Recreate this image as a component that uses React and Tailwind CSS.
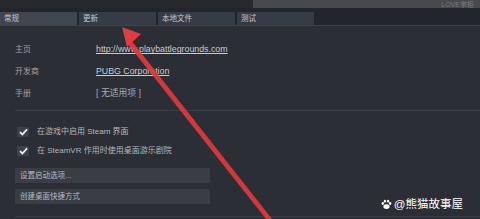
import React from 'react';

const tabs = ['常规', '更新', '本地文件', '测试'];

const info = [
  { label: '主页', value: 'http://www.playbattlegrounds.com', link: true },
  { label: '开发商', value: 'PUBG Corporation', link: true },
  { label: '手册', value: '[ 无适用项 ]', link: false },
];

function Check() {
  return (
    <span className="w-[12px] h-[10px] bg-[#3c4048] rounded-[1px] flex items-center justify-center">
      <svg width="9" height="8" viewBox="0 0 9 8">
        <path d="M1 4.2 L3.4 6.5 L8 1.3" fill="none" stroke="#f2f2f2" strokeWidth="1.8" />
      </svg>
    </span>
  );
}

function Arrow() {
  return (
    <svg className="absolute inset-0 pointer-events-none" width="480" height="219" viewBox="0 0 480 219">
      <path d="M131 40 L272 219 L266 219 L127 43 Z" fill="#e0393e" opacity="0.92" />
      <path d="M122 27 L141 34 L127 47 Z" fill="#e53a3f" />
    </svg>
  );
}

export default function App() {
  return (
    <div
      className="relative w-[480px] h-[219px] overflow-hidden bg-[#2b2e34] flex flex-col"
      style={{ fontFamily: '"Liberation Sans", "Noto Sans CJK SC", sans-serif' }}
    >
      {/* window strip */}
      <div className="h-[8px] flex">
        <div className="w-[253px] bg-[#27292d]" />
        <div className="flex-1 bg-[#48494c] flex justify-end items-end overflow-hidden">
          <span className="text-[7px] leading-[7px] mr-[6px] text-[#7b7c80]">LOVE掌柜</span>
        </div>
      </div>

      {/* tabs */}
      <div className="h-[18px] bg-[#22262c] flex items-end gap-[2px] border-b border-[#3c434d]">
        {tabs.map((t, i) => (
          <div
            key={t}
            className={
              'w-[77px] h-[13px] flex items-center pl-[4px] text-[7.5px] text-[#c3c6cb] ' +
              (i === 0 ? 'bg-[#3f4650]' : 'bg-[#363c45]')
            }
          >
            {t}
          </div>
        ))}
      </div>

      {/* general info */}
      <div className="pl-[15px] pt-[13px] flex flex-col">
        {info.map(row => (
          <div key={row.label} className="h-[22px] flex items-center">
            <span className="w-[81px] text-[8px] text-[#9ea1a6]">{row.label}</span>
            <span
              className={
                'text-[8.8px] ' +
                (row.link ? 'text-[#c9ccd1] underline underline-offset-1' : 'text-[#a9acb1]')
              }
            >
              {row.value}
            </span>
          </div>
        ))}
      </div>

      <div className="ml-[15px] mt-[5px] border-t border-[#3a3e45]" />

      {/* options */}
      <div className="pl-[17px] pt-[15px] flex flex-col gap-[7px]">
        <label className="flex items-center gap-[8px] h-[12px]">
          <Check />
          <span className="text-[8px] text-[#b4b7bc]">在游戏中启用 Steam 界面</span>
        </label>
        <label className="flex items-center gap-[8px] h-[12px]">
          <Check />
          <span className="text-[8px] text-[#b4b7bc]">在 SteamVR 作用时使用桌面游乐剧院</span>
        </label>
      </div>

      <div className="pl-[15px] pt-[11px] flex flex-col gap-[6px]">
        <button className="w-[195px] h-[15px] bg-[#393d44] text-left pl-[5px] text-[7.5px] text-[#b8bbc0]">
          设置启动选项...
        </button>
        <button className="w-[195px] h-[15px] bg-[#393d44] text-left pl-[5px] text-[7.5px] text-[#b8bbc0]">
          创建桌面快捷方式
        </button>
      </div>

      <div className="ml-[15px] mt-[12px] border-t border-[#3a3e45]" />

      <Arrow />

      {/* watermark */}
      <div className="absolute right-[17px] top-[199px] flex items-center gap-[2px] text-white text-[11.5px] leading-none">
        <svg width="11" height="11" viewBox="0 0 12 12">
          <ellipse cx="6" cy="8.3" rx="3.4" ry="2.7" fill="#fff" />
          <ellipse cx="2" cy="5" rx="1.3" ry="1.6" fill="#fff" />
          <ellipse cx="10" cy="5" rx="1.3" ry="1.6" fill="#fff" />
          <ellipse cx="4.3" cy="2.4" rx="1.2" ry="1.6" fill="#fff" />
          <ellipse cx="7.7" cy="2.4" rx="1.2" ry="1.6" fill="#fff" />
        </svg>
        <span>@熊猫故事屋</span>
      </div>
    </div>
  );
}
